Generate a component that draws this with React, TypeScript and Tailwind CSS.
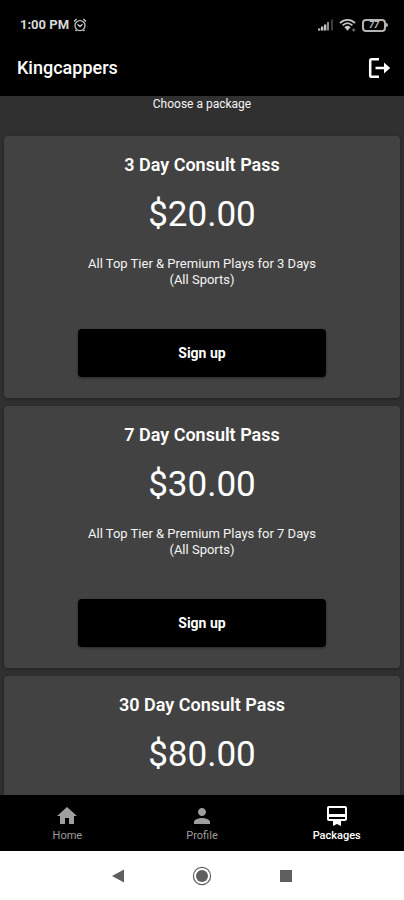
import type { ReactNode } from "react";
import { MdCardMembership, MdHome, MdPerson } from "react-icons/md";

type Plan = { name: string; price: string; details?: string[] };

const plans: Plan[] = [
  {
    name: "3 Day Consult Pass",
    price: "$20.00",
    details: ["All Top Tier & Premium Plays for 3 Days", "(All Sports)"],
  },
  {
    name: "7 Day Consult Pass",
    price: "$30.00",
    details: ["All Top Tier & Premium Plays for 7 Days", "(All Sports)"],
  },
  { name: "30 Day Consult Pass", price: "$80.00" },
];

function AlarmIcon() {
  return (
    <svg viewBox="0 0 14 14" className="size-[14px]" fill="none" stroke="currentColor" aria-hidden="true">
      <circle cx="7" cy="7.6" r="5" strokeWidth="1.3" />
      <path d="M1 3.4 3.6 1M13 3.4 10.4 1M2.6 13l1-1.2M11.4 13l-1-1.2M4.6 6.2 7 8.6l2.4-2.4" strokeWidth="1.4" />
    </svg>
  );
}

function SignalIcon() {
  return (
    <svg viewBox="0 0 16 12" className="h-3 w-4" fill="currentColor" aria-hidden="true">
      <rect x="0" y="9.5" width="2.4" height="2" />
      <rect x="3" y="7.5" width="2.4" height="4" />
      <rect x="6" y="5.5" width="2.4" height="6" />
      <rect x="9" y="3" width="2" height="8.5" opacity="0.7" />
      <rect x="13" y="0.5" width="2" height="11" opacity="0.3" />
    </svg>
  );
}

function WifiIcon() {
  return (
    <svg viewBox="0 0 18 14" className="h-[14px] w-[18px]" fill="none" stroke="currentColor" aria-hidden="true">
      <path d="M1 5C5.4.8 11.6.8 16 5" strokeWidth="1.9" />
      <path d="M3.6 7.4C6.8 4.4 10.2 4.4 13.4 7.4" strokeWidth="1.8" />
      <path d="M5.4 9.2C7.4 7.4 9.6 7.4 11.6 9.2L8.5 12.8z" fill="currentColor" stroke="none" />
      <path d="M13 12h3.4M14.7 10.4v3.2" strokeWidth="1.2" opacity="0.6" />
    </svg>
  );
}

function Battery() {
  return (
    <span className="flex items-center">
      <span className="flex h-[13px] w-6 items-center justify-center rounded-[4px] border-2 border-[#b4b4b4] text-[9px] leading-none font-bold italic">
        77
      </span>
      <span className="h-1 w-0.5 rounded-r bg-[#b4b4b4]" />
    </span>
  );
}

function LogoutIcon() {
  return (
    <svg viewBox="0 0 24 24" className="size-6" fill="none" aria-hidden="true">
      <path d="M12 3.2H4.5a1.3 1.3 0 0 0-1.3 1.3v15a1.3 1.3 0 0 0 1.3 1.3H12" stroke="currentColor" strokeWidth="2.5" />
      <path d="M8.5 12H19" stroke="currentColor" strokeWidth="2.5" />
      <path d="M17 6.6 23.2 12 17 17.4z" fill="currentColor" />
    </svg>
  );
}

function PlanCard({ plan }: { plan: Plan }) {
  return (
    <section className="flex min-h-[262px] flex-col items-center rounded-[4px] bg-[#424242] px-4 pt-[17px] text-center shadow-[0_1px_3px_rgba(0,0,0,0.35)]">
      <h2 className="text-[18px] leading-6 font-semibold text-white">{plan.name}</h2>
      <p className="mt-[18px] text-[35px] leading-10 text-white">{plan.price}</p>
      {plan.details && (
        <>
          <p className="mt-[21px] text-[13px] leading-4 text-[#f4f4f4]">
            {plan.details.map((line) => (
              <span key={line} className="block">
                {line}
              </span>
            ))}
          </p>
          <button
            type="button"
            className="mt-[41px] h-12 w-[68%] rounded-[4px] bg-black text-[14px] font-bold text-white shadow-[0_1px_3px_rgba(0,0,0,0.4)]"
          >
            Sign up
          </button>
        </>
      )}
    </section>
  );
}

function Tab({ label, icon, active = false }: { label: string; icon: ReactNode; active?: boolean }) {
  return (
    <a
      href="#"
      aria-current={active ? "page" : undefined}
      className={
        active
          ? "flex flex-1 flex-col items-center text-white"
          : "flex flex-1 flex-col items-center text-[#9e9e9e]"
      }
    >
      {icon}
      <span className={active ? "text-[11px] leading-4 font-medium" : "text-[11px] leading-4"}>{label}</span>
    </a>
  );
}

export default function App() {
  return (
    <div className="flex h-screen flex-col bg-[#303030] font-['Roboto',sans-serif]">
      <header className="bg-black text-white">
        <div className="flex h-10 items-center justify-between pt-[10px] pr-4 pl-5 text-[#c4c4c4]">
          <div className="flex items-center gap-1">
            <span className="text-[13px] leading-4 font-bold text-[#d8d8d8]">1:00 PM</span>
            <AlarmIcon />
          </div>
          <div className="flex items-center gap-[5px]">
            <SignalIcon />
            <WifiIcon />
            <Battery />
          </div>
        </div>
        <div className="flex h-14 items-center justify-between pr-[13px] pl-[17px]">
          <h1 className="text-[18px] leading-6 font-medium">Kingcappers</h1>
          <button type="button" aria-label="Log out">
            <LogoutIcon />
          </button>
        </div>
      </header>

      <main className="min-h-0 flex-1 overflow-hidden px-1">
        <p className="h-10 text-center text-[12px] leading-4 text-[#f4f4f4]">Choose a package</p>
        <div className="flex flex-col gap-2">
          {plans.map((plan) => (
            <PlanCard key={plan.name} plan={plan} />
          ))}
        </div>
      </main>

      <nav aria-label="Main" className="flex h-14 bg-black pt-[9px]">
        <Tab label="Home" icon={<MdHome className="size-6" />} />
        <Tab label="Profile" icon={<MdPerson className="size-6" />} />
        <Tab label="Packages" icon={<MdCardMembership className="size-6" />} active />
      </nav>

      <div className="flex h-[49px] items-center justify-center gap-[67px] bg-white text-[#5f5f5f]">
        <button type="button" aria-label="Back">
          <svg viewBox="0 0 14 14" className="size-[14px]" aria-hidden="true">
            <path d="M13 .5v13L1 7z" fill="currentColor" />
          </svg>
        </button>
        <button type="button" aria-label="Home screen">
          <svg viewBox="0 0 20 20" className="size-5" aria-hidden="true">
            <circle cx="10" cy="10" r="8.6" fill="none" stroke="currentColor" strokeWidth="1.2" />
            <circle cx="10" cy="10" r="6" fill="currentColor" />
          </svg>
        </button>
        <button type="button" aria-label="Recent apps">
          <svg viewBox="0 0 14 14" className="size-[14px]" aria-hidden="true">
            <rect x="1" y="1" width="12" height="12" fill="currentColor" />
          </svg>
        </button>
      </div>
    </div>
  );
}
